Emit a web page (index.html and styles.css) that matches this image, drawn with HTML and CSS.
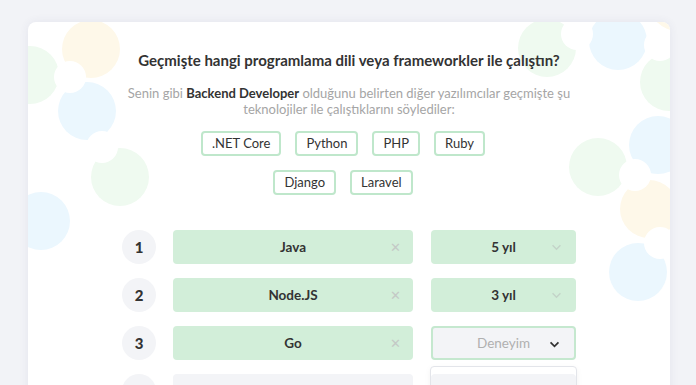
FILE: index.html
```html
<!DOCTYPE html>
<html lang="tr">
<head>
<meta charset="utf-8">
<link rel="stylesheet" href="styles.css">
</head>
<body>
<div class="card">
  <div class="deco">
    <span class="c yellow" style="left:34px;top:-2px"></span>
    <span class="c green" style="left:-27px;top:24px"></span>
    <span class="c blue" style="left:30px;top:60px"></span>
    <span class="c white" style="left:26px;top:39px"></span>
    <span class="c green" style="left:63px;top:126px"></span>
    <span class="c white" style="left:58px;top:109px"></span>
    <span class="c blue" style="left:-16px;top:170px"></span>

    <span class="c green" style="left:490px;top:-3px"></span>
    <span class="c blue" style="left:561px;top:-10px"></span>
    <span class="c yellow" style="left:621px;top:-49px"></span>
    <span class="c white" style="left:533px;top:-4px"></span>
    <span class="c green" style="left:612px;top:31px"></span>
    <span class="c white" style="left:616px;top:7px"></span>
    <span class="c blue" style="left:601px;top:94px"></span>
    <span class="c green" style="left:541px;top:116px"></span>
    <span class="c yellow" style="left:592px;top:158px"></span>
    <span class="c white" style="left:591px;top:137px"></span>
    <span class="c blue" style="left:581px;top:221px"></span>
    <span class="c white" style="left:616px;top:205px"></span>
  </div>

  <div class="content">
    <h1 class="title">Geçmişte hangi programlama dili veya frameworkler ile çalıştın?</h1>
    <p class="sub">Senin gibi <b>Backend Developer</b> olduğunu belirten diğer yazılımcılar geçmişte şu teknolojiler ile çalıştıklarını söylediler:</p>

    <div class="tags">
      <span class="tag">.NET Core</span>
      <span class="tag">Python</span>
      <span class="tag">PHP</span>
      <span class="tag">Ruby</span>
      <span class="tag">Django</span>
      <span class="tag">Laravel</span>
    </div>

    <div class="rows">
      <div class="num">1</div>
      <div class="lang"><span>Java</span><span class="x">&#x2715;</span></div>
      <div class="sel"><span>5 yıl</span><svg class="chev" viewBox="0 0 12 8"><path d="M1.5 1.5 L6 6 L10.5 1.5"/></svg></div>

      <div class="num">2</div>
      <div class="lang"><span>Node.JS</span><span class="x">&#x2715;</span></div>
      <div class="sel"><span>3 yıl</span><svg class="chev" viewBox="0 0 12 8"><path d="M1.5 1.5 L6 6 L10.5 1.5"/></svg></div>

      <div class="num">3</div>
      <div class="lang"><span>Go</span><span class="x">&#x2715;</span></div>
      <div class="sel open"><span>Deneyim</span><svg class="chev dark" viewBox="0 0 12 8"><path d="M1.5 1.5 L6 6 L10.5 1.5"/></svg>
        <div class="menu"><div class="opt">1 yıl</div><div class="opt">2 yıl</div></div>
      </div>

      <div class="num"></div>
      <div class="lang empty"></div>
      <div class="sel empty"></div>
    </div>
  </div>
</div>
</body>
</html>
```
FILE: styles.css
```css
html, body {
  margin: 0;
  padding: 0;
  background: #f2f3f7;
  overflow: hidden;
  height: 385px;
}
body {
  font-family: Lato, "Noto Sans", sans-serif;
  color: #333;
}
.card {
  position: relative;
  margin: 22px 0 0 28px;
  width: 642px;
  height: 420px;
  background: #fff;
  border-radius: 8px;
  box-shadow: 0 0 10px rgba(60, 70, 110, 0.08);
  overflow: hidden;
}
.deco {
  position: absolute;
  inset: 0;
  pointer-events: none;
}
.c {
  position: absolute;
  width: 58px;
  height: 58px;
  border-radius: 50%;
}
.yellow { background: #fef8e9; }
.green { background: #effaf0; }
.blue { background: #ebf7fe; }
.c.white {
  width: 32px;
  height: 32px;
  background: #fff;
}
.content {
  position: relative;
  display: flex;
  flex-direction: column;
  align-items: center;
  padding-top: 28px;
}
.title {
  margin: 0;
  font-size: 15px;
  font-weight: 700;
  line-height: 20px;
  color: #333;
}
.sub {
  margin: 15px 0 0;
  width: 470px;
  text-align: center;
  font-size: 13px;
  line-height: 16px;
  color: #a5a5a5;
}
.sub b {
  color: #333;
  font-weight: 700;
}
.tags {
  display: flex;
  flex-wrap: wrap;
  justify-content: center;
  width: 312px;
  row-gap: 14px;
  margin-top: 14px;
  padding-left: 2px;
}
.tag {
  box-sizing: border-box;
  height: 25px;
  margin-right: 14px;
  padding: 0 9px;
  border: 2px solid #bfe7cb;
  border-radius: 4px;
  font-size: 13px;
  line-height: 21px;
  color: #333;
}
.rows {
  display: grid;
  grid-template-columns: 34px 240px 146px;
  column-gap: 17px;
  row-gap: 14px;
  margin-top: 35px;
}
.num {
  width: 34px;
  height: 34px;
  border-radius: 50%;
  background: #f3f4f7;
  display: flex;
  align-items: center;
  justify-content: center;
  font-size: 15px;
  font-weight: 900;
  color: #333;
}
.lang {
  position: relative;
  height: 34px;
  border-radius: 4px;
  background: #d2eed9;
  display: flex;
  align-items: center;
  justify-content: center;
  font-size: 13.5px;
  font-weight: 700;
  color: #333;
}
.x {
  position: absolute;
  right: 12px;
  top: 9px;
  font-size: 13px;
  font-weight: 400;
  color: #c4c9c6;
}
.sel {
  position: relative;
  box-sizing: border-box;
  height: 34px;
  margin-left: 1px;
  border-radius: 4px;
  background: #d2eed9;
  display: flex;
  align-items: center;
  justify-content: center;
  font-size: 13.5px;
  font-weight: 700;
  color: #333;
}
.chev {
  position: absolute;
  right: 14px;
  top: 14px;
  width: 11px;
  height: 7px;
  fill: none;
  stroke: #c3d3c8;
  stroke-width: 1.6;
}
.chev.dark {
  stroke: #333;
  stroke-width: 2;
  top: 13px;
}
.sel.open {
  background: #f3f4f7;
  border: 2px solid #c5e8cf;
  color: #b0b0b0;
  font-weight: 400;
}
.menu {
  position: absolute;
  left: -3px;
  right: -3px;
  top: 38px;
  background: #fff;
  border: 1px solid #e3e5ea;
  border-radius: 4px;
  box-shadow: 0 2px 6px rgba(0,0,0,0.05);
  text-align: left;
}
.opt {
  padding: 6px 10px 7px;
  font-size: 14px;
  line-height: 18px;
  font-weight: 400;
  color: #333;
}
.empty, .sel.empty {
  background: #f3f4f7;
}
```
